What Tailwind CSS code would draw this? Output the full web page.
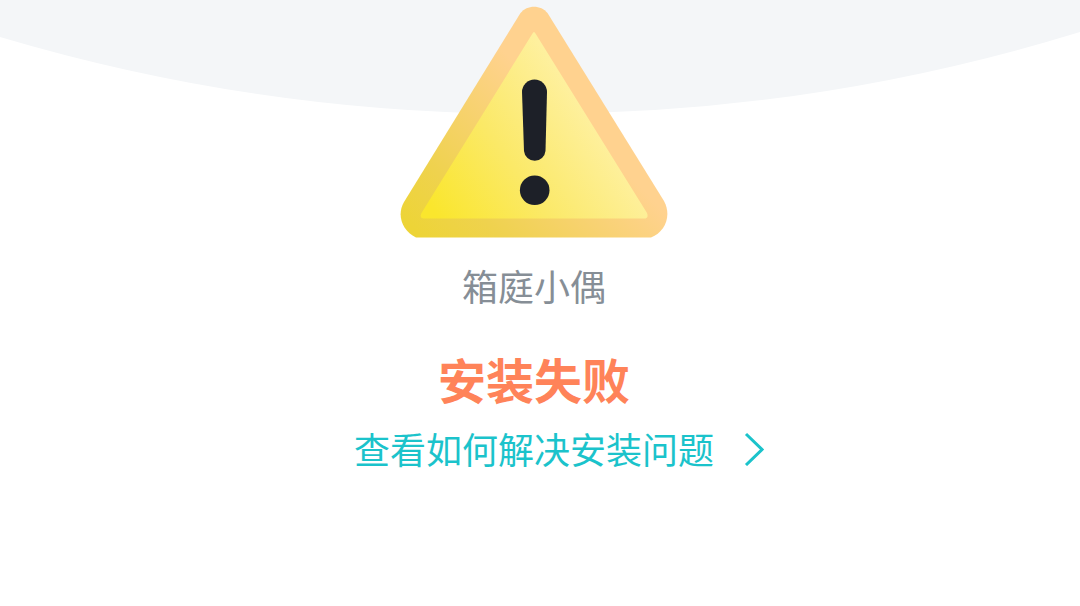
<!DOCTYPE html>
<html lang="zh-CN">
<head>
<meta charset="utf-8">
<meta name="viewport" content="width=device-width, initial-scale=1">
<title>安装失败</title>
<script src="https://cdn.jsdelivr.net/npm/@tailwindcss/browser@4"></script>
</head>
<body class="relative min-h-screen bg-white font-['Noto_Sans_CJK_SC',sans-serif]">
<svg class="absolute inset-x-0 top-0 -z-10 h-[116px] w-full" viewBox="0 0 1080 116" preserveAspectRatio="none" aria-hidden="true">
  <path d="M0 0H1080V32A1860 1860 0 0 1 534 114A1860 1860 0 0 1 0 37Z" fill="#f4f6f8"/>
</svg>
<main class="flex flex-col items-center pr-3 text-center">
  <svg class="h-[240px] w-[270px]" viewBox="399 0 270 240" role="img" aria-label="警告">
    <defs>
      <linearGradient id="rim" gradientUnits="userSpaceOnUse" x1="425" y1="240" x2="559" y2="106">
        <stop offset="0" stop-color="#edd437"/>
        <stop offset="0.3" stop-color="#efd24e"/>
        <stop offset="1" stop-color="#ffd28f"/>
      </linearGradient>
      <linearGradient id="face" gradientUnits="userSpaceOnUse" x1="440" y1="220" x2="590" y2="115">
        <stop offset="0" stop-color="#fae62d"/>
        <stop offset="0.5" stop-color="#fbe968"/>
        <stop offset="1" stop-color="#fef09e"/>
      </linearGradient>
    </defs>
    <path d="M520.500 13C527 4.500 541 4.500 547.500 13L664 201C672 216 665 232 651 237.500H416C402 231 396.500 215 404 202Z" fill="url(#rim)"/>
    <path d="M532.500 33.500Q534 30.500 535.500 33.500L647 213Q649 218.500 644 218.500H424Q419 218.500 421.500 213Z" fill="url(#face)"/>
    <path d="M522 92A12.500 12.500 0 0 1 547 92L545.500 151A10.800 10.800 0 0 1 524 151Z" fill="#1d2028"/>
    <circle cx="534.700" cy="190.200" r="14.800" fill="#1d2028"/>
  </svg>
  <p class="mt-[18px] text-[36px] leading-[54px] text-[#868e96]">箱庭小偶</p>
  <h1 class="mt-[30px] text-[48px] leading-[72px] font-bold text-[#ff8359]">安装失败</h1>
  <a href="#" class="mt-[7px] flex items-center pl-[50px] text-[36px] leading-[54px] text-[#1bc3cb]">
    <span>查看如何解决安装问题</span>
    <svg class="ml-[30px] h-9 w-5" viewBox="0 0 20 36" fill="none" stroke="currentColor" stroke-width="3" aria-hidden="true">
      <path d="M2 4L18 19.500L2 35"/>
    </svg>
  </a>
</main>
</body>
</html>
